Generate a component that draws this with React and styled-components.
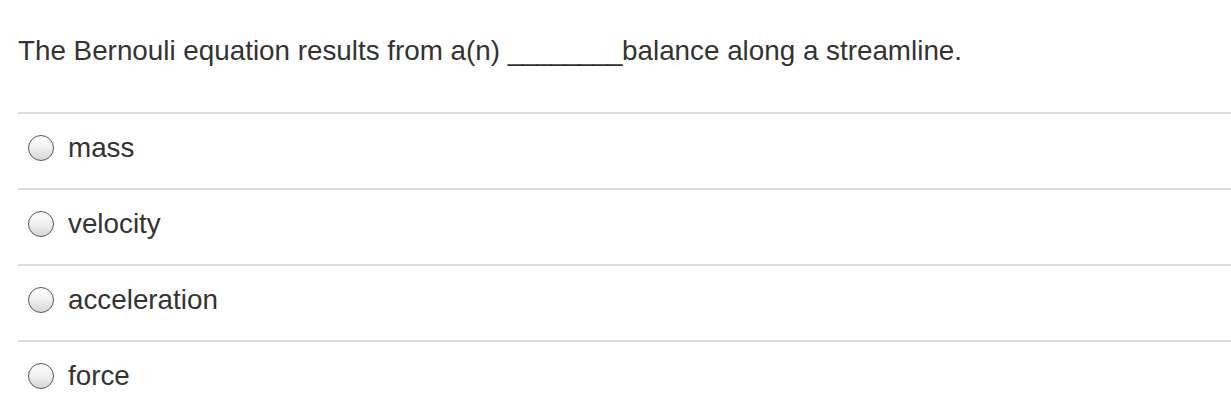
import React from "react";
import styled, { createGlobalStyle } from "styled-components";

const GlobalStyle = createGlobalStyle`
  html, body {
    margin: 0;
    padding: 0;
    background: #fff;
  }
  body {
    font-family: "Liberation Sans", Arial, Helvetica, sans-serif;
    color: #333;
  }
`;

const Page = styled.div`
  padding-left: 18px;
`;

const Question = styled.p`
  margin: 35px 0 45px;
  font-size: 27.8px;
  line-height: 32px;
  color: #333;
`;

const Blank = styled.span`
  letter-spacing: -1.3px;
  margin-right: 1px;
`;

const Options = styled.div`
  display: flex;
  flex-direction: column;
`;

const Row = styled.label`
  display: flex;
  align-items: center;
  gap: 14px;
  padding: 0 0 6px 10px;
  box-sizing: border-box;
  height: 76px;
  border-top: 2px solid #dedede;
  cursor: pointer;
`;

const Radio = styled.span`
  width: 26px;
  height: 26px;
  box-sizing: border-box;
  border-radius: 50%;
  border: 1.5px solid #575757;
  background: linear-gradient(to bottom, #ffffff 0%, #f2f2f2 45%, #d6d6d6 100%);
  flex-shrink: 0;
`;

const Label = styled.span`
  font-size: 27.8px;
  line-height: 32px;
  color: #333;
`;

const options = ["mass", "velocity", "acceleration", "force"];

const App = () => {
  return (
    <Page>
      <GlobalStyle />
      <Question>
        The Bernouli equation results from a(n) <Blank>________</Blank>balance along a streamline.
      </Question>
      <Options>
        {options.map((o) => (
          <Row key={o}>
            <Radio />
            <Label>{o}</Label>
          </Row>
        ))}
      </Options>
    </Page>
  );
};

export default App;
